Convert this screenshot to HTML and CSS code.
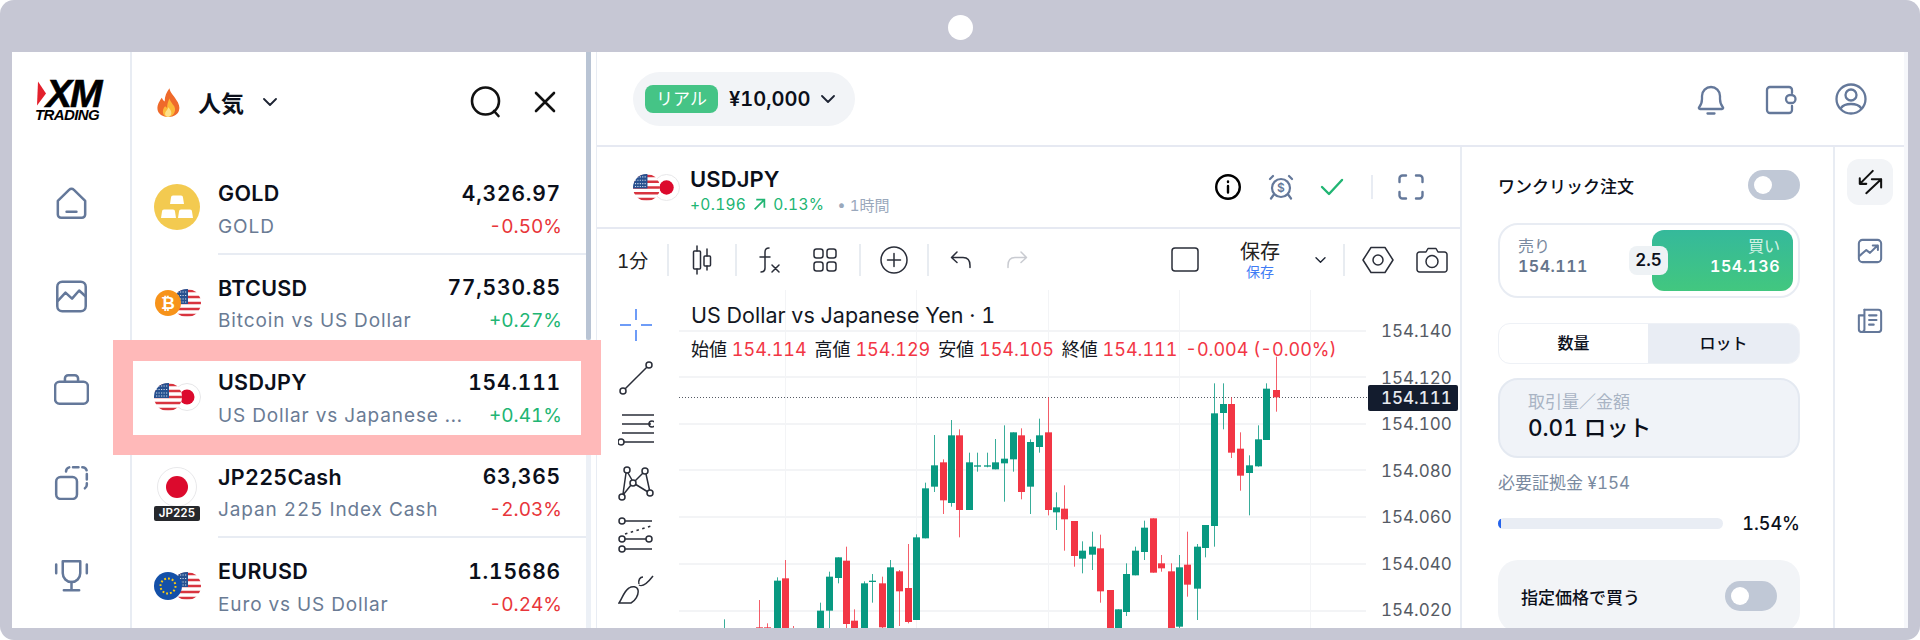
FILE: index.html
```html
<!DOCTYPE html>
<html lang="ja">
<head>
    <meta charset="UTF-8">
    <meta name="viewport" content="width=device-width, initial-scale=1.0">
    <title>XM Trading</title>
    <link rel="stylesheet" href="styles.css">
</head>
<body>
    <svg class="defs" width="0" height="0">
        <defs>
            <clipPath id="clipDisc"><circle cx="14" cy="14" r="14"/></clipPath>
            <symbol id="flagUs" viewBox="0 0 28 28">
                <g clip-path="url(#clipDisc)">
                    <rect width="28" height="28" fill="#fff"/>
                    <path d="M0 2h28M0 8h28M0 14h28M0 20h28M0 26h28" stroke="#d8343f" stroke-width="2.6"/>
                    <rect width="15" height="15" fill="#27508f"/>
                    <path d="M2 3h12M2 6.5h12M2 10h12M2 13h12" stroke="#cfd9ea" stroke-width="1.2" stroke-dasharray="1.2 1.3"/>
                </g>
            </symbol>
            <symbol id="flagJp" viewBox="0 0 28 28">
                <circle cx="14" cy="14" r="13.5" fill="#fff" stroke="#e6e6e8" stroke-width="1"/>
                <circle cx="14" cy="14" r="7.5" fill="#dc0a2d"/>
            </symbol>
        </defs>
    </svg>

    <div class="frame">
        <div class="frame-top"><span class="notch"></span></div>

        <div class="panel">
            <nav class="rail">
                <div class="logo">
                    <svg class="logo-mark" viewBox="0 0 9 24"><polygon points="1,0 9,12 0,24" fill="#e3202c"/></svg>
                    <span class="logo-xm">XM</span>
                    <span class="logo-sub">TRADING</span>
                </div>
                <svg class="rail-icon" viewBox="0 0 32 32"><path d="M3.5 13.6 14 3.4a2.8 2.8 0 0 1 4 0l10.500 10.200V26a3 3 0 0 1-3 3h-19a3 3 0 0 1-3-3z"/><path d="M11.500 23.500h9"/></svg>
                <svg class="rail-icon" viewBox="0 0 32 32"><rect x="3" y="2.500" width="26" height="27" rx="4.500"/><path d="m3.500 20 7-7.500 6 5.500 6.500-7.500 5.500 5"/></svg>
                <svg class="rail-icon" viewBox="0 0 32 32"><rect x="1" y="9" width="30" height="20" rx="4"/><path d="M10 9V6a3 3 0 0 1 3-3h6a3 3 0 0 1 3 3v3"/></svg>
                <svg class="rail-icon" viewBox="0 0 32 32"><rect x="2" y="11" width="19" height="20" rx="4"/><path d="M11 6a4 4 0 0 1 4-4h11a4 4 0 0 1 4 4v12a4 4 0 0 1-4 4" stroke-dasharray="5 3.500"/></svg>
                <svg class="rail-icon" viewBox="0 0 32 32"><path d="M8 3h16v11a8 8 0 0 1-16 0z"/><path d="M2 6v8M30 6v8M16 22v7M9 29.500h14"/></svg>
            </nav>

            <section class="watchlist">
                <header class="list-head">
                    <svg class="fire" viewBox="0 0 24 30">
                        <path d="M13 0c1 5 4 7 7 12 3 4 4 8 3 11-1 4-5 7-11 7S1 27 .5 22C0 17 3 13 5 10c1 2 1.500 3 3 4C8 8 10 4 13 0z" fill="#ef6a2b"/>
                        <path d="M13 11c1 3 3 5 5 8 1.500 3 1 6-1 8.500-1.500 1.800-3.500 2.500-5.500 2.500s-4-1-5-3c-1-3 0-6 2-8 1 1 1.500 1 2 2 0-4 1-7 2.500-10.500z" fill="#fcb737"/>
                        <path d="M12 20c1 2 3 3 3 6 0 2-1.500 4-3.500 4S8 28 8.500 26c.3-2 2.500-3 3.500-6z" fill="#fde08a"/>
                    </svg>
                    <span class="list-title">人気</span>
                    <svg class="chev list-chev" viewBox="0 0 14 8"><path d="m1 1 6 6 6-6"/></svg>
                    <svg class="search" viewBox="0 0 32 32"><circle cx="15.500" cy="15" r="13.500"/><path d="m24 25 4.500 5"/></svg>
                    <svg class="close" viewBox="0 0 22 22"><path d="m2 2 18 18M20 2 2 20"/></svg>
                </header>

                <div class="row">
                    <div class="row-icon">
                        <svg viewBox="0 0 46 46" width="46" height="46">
                            <circle cx="23" cy="23" r="23" fill="#f3ca50"/>
                            <path d="M17 13.500a2 2 0 0 1 2-2h8a2 2 0 0 1 2 2l1 6.500H16zM8 27.500a2 2 0 0 1 2-2h9a2 2 0 0 1 2 2l1 6.500H7zM25 27.500a2 2 0 0 1 2-2h9a2 2 0 0 1 2 2l1 6.500H24z" fill="#fff"/>
                        </svg>
                    </div>
                    <div class="row-body">
                        <div class="row-line"><span class="sym">GOLD</span><span class="price">4,326.97</span></div>
                        <div class="row-line row-sub"><span class="desc">GOLD</span><span class="down">-0.50%</span></div>
                    </div>
                </div>
                <div class="row">
                    <div class="row-icon">
                        <svg class="flag flag-back" viewBox="0 0 28 28"><use href="#flagUs"/></svg>
                        <svg class="flag flag-front" viewBox="0 0 28 28">
                            <circle cx="14" cy="14" r="13" fill="#f7931a"/>
                            <text x="14" y="20" class="btc-text">₿</text>
                        </svg>
                    </div>
                    <div class="row-body">
                        <div class="row-line"><span class="sym">BTCUSD</span><span class="price">77,530.85</span></div>
                        <div class="row-line row-sub"><span class="desc">Bitcoin vs US Dollar</span><span class="up">+0.27%</span></div>
                    </div>
                </div>
                <div class="row">
                    <div class="row-icon">
                        <svg class="flag flag-back" viewBox="0 0 28 28"><use href="#flagJp"/></svg>
                        <svg class="flag flag-front" viewBox="0 0 28 28"><use href="#flagUs"/></svg>
                    </div>
                    <div class="row-body">
                        <div class="row-line"><span class="sym">USDJPY</span><span class="price">154.111</span></div>
                        <div class="row-line row-sub"><span class="desc">US Dollar vs Japanese ...</span><span class="up">+0.41%</span></div>
                    </div>
                </div>
                <div class="row">
                    <div class="row-icon">
                        <svg class="jp-disc" viewBox="0 0 40 40"><circle cx="20" cy="20" r="19.500" fill="#fff" stroke="#e8e8ea"/><circle cx="20" cy="20" r="11" fill="#dc0a2d"/></svg>
                        <span class="jp-tag">JP225</span>
                    </div>
                    <div class="row-body">
                        <div class="row-line"><span class="sym">JP225Cash</span><span class="price">63,365</span></div>
                        <div class="row-line row-sub"><span class="desc">Japan 225 Index Cash</span><span class="down">-2.03%</span></div>
                    </div>
                </div>
                <div class="row">
                    <div class="row-icon">
                        <svg class="flag flag-back" viewBox="0 0 28 28"><use href="#flagUs"/></svg>
                        <svg class="flag flag-front" viewBox="0 0 28 28">
                            <circle cx="14" cy="14" r="14" fill="#1450a8"/>
                            <circle cx="14" cy="14" r="7.500" fill="none" stroke="#f6c913" stroke-width="2" stroke-dasharray="1.900 2"/>
                        </svg>
                    </div>
                    <div class="row-body">
                        <div class="row-line"><span class="sym">EURUSD</span><span class="price">1.15686</span></div>
                        <div class="row-line row-sub"><span class="desc">Euro vs US Dollar</span><span class="down">-0.24%</span></div>
                    </div>
                </div>
            </section>
            <div class="list-scroll"><span class="list-thumb"></span></div>

            <main class="main">
                <header class="topbar">
                    <div class="account">
                        <span class="badge">リアル</span>
                        <span class="balance">¥10,000</span>
                        <svg class="chev" viewBox="0 0 14 8"><path d="m1 1 6 6 6-6"/></svg>
                    </div>
                    <div class="top-icons">
                        <svg class="top-icon" viewBox="0 0 32 32"><path d="M4 24.500c2-2.500 3-4 3-8.500v-3a9 9 0 0 1 18 0v3c0 4.500 1 6 3 8.500.4.600 0 1.500-1 1.500H5c-1 0-1.400-.9-1-1.500zM12.500 30.500h7"/></svg>
                        <svg class="top-icon" viewBox="0 0 32 32"><path d="M27 10V7a3 3 0 0 0-3-3H5a3 3 0 0 0-3 3v20a3 3 0 0 0 3 3h19a3 3 0 0 0 3-3v-4"/><rect x="21" y="12" width="9.500" height="8" rx="4"/></svg>
                        <svg class="top-icon" viewBox="0 0 32 32"><circle cx="16" cy="16" r="14.500"/><circle cx="16" cy="12" r="5.500"/><path d="M6 25c2-3 6-4 10-4s8 1 10 4"/></svg>
                    </div>
                </header>

                <div class="workspace">
                    <div class="chart-col">
                        <div class="chart-head">
                            <div class="pair-icon">
                                <svg class="pair-flag pair-jp" viewBox="0 0 28 28"><use href="#flagJp"/></svg>
                                <svg class="pair-flag pair-us" viewBox="0 0 28 28"><use href="#flagUs"/></svg>
                            </div>
                            <div class="pair-text">
                                <div class="pair-name">USDJPY</div>
                                <div class="pair-sub">
                                    <span>+0.196</span>
                                    <svg class="trend" viewBox="0 0 12 12"><path d="M1.500 10.500 10.500 1.500M3 1.500h7.500V9"/></svg>
                                    <span>0.13%</span>
                                    <span class="pair-time">• 1時間</span>
                                </div>
                            </div>
                            <div class="head-icons">
                                <svg class="head-icon info" viewBox="0 0 26 26"><circle cx="13" cy="13" r="11.800"/><path d="M13 12v6.500M13 7.500v.6"/></svg>
                                <svg class="head-icon alarm" viewBox="0 0 26 26"><circle cx="13" cy="14" r="9"/><path d="m2 5 3-3M24 5l-3-3M5.500 21 3 24.500M20.500 21l2.500 3.500"/><text x="13" y="18" class="alarm-text">$</text></svg>
                                <svg class="head-icon check" viewBox="0 0 24 18"><path d="m2 9 7 7L22 2"/></svg>
                                <span class="head-sep"></span>
                                <svg class="head-icon full" viewBox="0 0 26 26"><path d="M1.500 8V4.500a3 3 0 0 1 3-3H8M18 1.500h3.500a3 3 0 0 1 3 3V8M24.500 18v3.500a3 3 0 0 1-3 3H18M8 24.500H4.500a3 3 0 0 1-3-3V18"/></svg>
                            </div>
                        </div>

                        <div class="toolbar">
                            <span class="interval">1分</span>
                            <span class="sep"></span>
                            <button class="tool w66"><svg viewBox="0 0 24 30" width="24" height="30"><path d="M7 1v5M7 24v5M17 4v7M17 21v4"/><rect x="3.500" y="6" width="7" height="18" rx="1"/><rect x="14" y="11" width="6.500" height="10" rx="1"/></svg></button>
                            <span class="sep"></span>
                            <button class="tool w64"><svg viewBox="0 0 26 28" width="26" height="28"><path d="M13 2c-3 0-4 1.500-4 4v16c0 3-1.500 4-4 4M4 11h10M16 19l7 7M23 19l-7 7"/></svg></button>
                            <button class="tool w48"><svg viewBox="0 0 24 24" width="24" height="24"><rect x="1" y="1" width="9" height="9" rx="2.500"/><rect x="14" y="1" width="9" height="9" rx="2.500"/><rect x="1" y="14" width="9" height="9" rx="2.500"/><rect x="14" y="14" width="9" height="9" rx="2.500"/></svg></button>
                            <span class="sep sep-gap"></span>
                            <button class="tool w66"><svg viewBox="0 0 28 28" width="28" height="28"><circle cx="14" cy="14" r="13"/><path d="M14 7.500v13M7.500 14h13"/></svg></button>
                            <span class="sep"></span>
                            <button class="tool w64"><svg viewBox="0 0 22 18" width="22" height="18"><path d="M7 1 1.500 6.500 7 11.500M2 6.500h11c4.500 0 7 3 7 8v2"/></svg></button>
                            <button class="tool w48 muted"><svg viewBox="0 0 22 18" width="22" height="18"><path d="m15 1 5.500 5.500-5.500 5M20 6.500H9c-4.500 0-7 3-7 8v2"/></svg></button>

                            <div class="tool-right">
                                <button class="tool w40"><svg viewBox="0 0 28 25" width="28" height="25"><rect x="1" y="1" width="26" height="23" rx="3"/></svg></button>
                                <div class="save">
                                    <span class="save-main">保存</span>
                                    <span class="save-sub">保存</span>
                                </div>
                                <svg class="chev save-chev" viewBox="0 0 14 8"><path d="m1 1 6 6 6-6"/></svg>
                                <span class="sep sep-right"></span>
                                <button class="tool w52"><svg viewBox="0 0 32 28" width="32" height="28"><path d="M9 1.500h14l8 12.500-8 12.500H9L1 14z"/><circle cx="16" cy="14" r="5"/></svg></button>
                                <button class="tool w56"><svg viewBox="0 0 32 26" width="32" height="26"><path d="M3.500 5H10l2-3.500h8L22 5h6.500a2.500 2.500 0 0 1 2.500 2.500v15a2.500 2.500 0 0 1-2.500 2.500h-25A2.500 2.500 0 0 1 1 22.500v-15A2.500 2.500 0 0 1 3.500 5z"/><circle cx="16" cy="14.500" r="6"/></svg></button>
                            </div>
                        </div>

                        <div class="chart-body">
                            <div class="draw-tools">
                                <svg class="draw crosshair" viewBox="0 0 36 36"><path d="M18 2v11M18 23v11M2 18h11M23 18h11"/></svg>
                                <svg class="draw" viewBox="0 0 36 36"><circle cx="5" cy="31" r="3"/><circle cx="31" cy="5" r="3"/><path d="M7.200 28.800 28.800 7.200"/></svg>
                                <svg class="draw" viewBox="0 0 36 36"><path d="M4 3h32M4 12h29M4 21h32M6 30h30"/><circle cx="34" cy="12" r="3"/><circle cx="3" cy="30" r="3"/></svg>
                                <svg class="draw" viewBox="0 0 36 36"><circle cx="9" cy="5" r="3"/><circle cx="27" cy="6" r="3"/><circle cx="15" cy="18" r="3"/><circle cx="4" cy="32" r="3"/><circle cx="32" cy="28" r="3"/><path d="M10 8l4 7M25 8l-8 8M17 19l13 8M13 20l-8 10M5 29 8 8M28 9l3.500 16"/></svg>
                                <svg class="draw" viewBox="0 0 36 36"><circle cx="4" cy="4" r="3"/><circle cx="4" cy="22" r="3"/><circle cx="31" cy="22" r="3"/><circle cx="4" cy="32" r="3"/><path d="M7 4h27M7 22h21M7 32h27"/><path d="M7 17 33 9" stroke-dasharray="2.500 3.500"/></svg>
                                <svg class="draw" viewBox="0 0 36 36"><path d="M1 33c3-4 5-12 10-15 3-2 8-2 9 2 1 5-3 11-7 13z"/><path d="M21 14c-1-4 1-7 4-7M21 15c3 2 7 0 14-9"/></svg>
                            </div>

                            <div class="stage">
                                <svg id="candles" class="candles" viewBox="672 290 789 338"></svg>
                                <div class="legend">
                                    <div class="legend-title">US Dollar vs Japanese Yen · 1</div>
                                    <div class="legend-ohlc">
                                        <span class="ohlc-key">始値</span> <span class="ohlc-val">154.114</span>
                                        <span class="ohlc-key">高値</span> <span class="ohlc-val">154.129</span>
                                        <span class="ohlc-key">安値</span> <span class="ohlc-val">154.105</span>
                                        <span class="ohlc-key">終値</span> <span class="ohlc-val">154.111</span>
                                        <span class="ohlc-val">-0.004 (-0.00%)</span>
                                    </div>
                                </div>
                                <div class="axis">
                                    <span>154.140</span>
                                    <span>154.120</span>
                                    <span>154.100</span>
                                    <span>154.080</span>
                                    <span>154.060</span>
                                    <span>154.040</span>
                                    <span>154.020</span>
                                </div>
                                <span class="last-price">154.111</span>
                            </div>
                        </div>
                    </div>

                    <aside class="order">
                        <div class="order-line">
                            <span class="order-label">ワンクリック注文</span>
                            <span class="toggle"><span class="knob"></span></span>
                        </div>
                        <div class="quote">
                            <div class="sell">
                                <span class="sell-label">売り</span>
                                <span class="sell-price">154.111</span>
                            </div>
                            <div class="buy">
                                <span class="buy-label">買い</span>
                                <span class="buy-price">154.136</span>
                            </div>
                            <span class="spread">2.5</span>
                        </div>
                        <div class="segment">
                            <span class="seg">数量</span>
                            <span class="seg seg-on">ロット</span>
                        </div>
                        <div class="volume">
                            <span class="volume-label">取引量／金額</span>
                            <span class="volume-value">0.01 ロット</span>
                        </div>
                        <div class="margin-label">必要証拠金 ¥154</div>
                        <div class="margin-line">
                            <div class="bar"><span class="bar-fill"></span></div>
                            <span class="margin-pct">1.54%</span>
                        </div>
                        <div class="limit">
                            <span class="order-label">指定価格で買う</span>
                            <span class="toggle"><span class="knob"></span></span>
                        </div>
                    </aside>

                    <div class="side">
                        <div class="side-btn side-on"><svg class="side-icon dark" viewBox="0 0 28 28"><path d="M17 2 3 16M3 10v6h7M10 26l16-15M16 11h10v9"/></svg></div>
                        <div class="side-btn"><svg class="side-icon" viewBox="0 0 28 28"><rect x="2" y="2" width="24" height="24" rx="4"/><path d="m3 19 7-6 4 3 8-8M17 8h5.500v5"/></svg></div>
                        <div class="side-btn"><svg class="side-icon" viewBox="0 0 28 28"><path d="M8 3h15a3 3 0 0 1 3 3v18a3 3 0 0 1-3 3H5"/><path d="M8 3v21a3 3 0 0 1-3 3 3 3 0 0 1-3-3V9h6M13 9h8M13 14h8M13 19h5"/></svg></div>
                    </div>
                </div>
            </main>
        </div>

        <div class="highlight"></div>
    </div>

    <script src="chart.js"></script>
</body>
</html>
```

FILE: styles.css
```css
* {
    box-sizing: border-box;
}
body {
    margin: 0;
    background: #ffffff;
    font-family: Inter, "Noto Sans CJK JP", sans-serif;
    font-variant-numeric: tabular-nums;
    color: #0b0f1a;
}
svg {
    display: block;
    fill: none;
}
button {
    padding: 0;
    border: none;
    background: none;
}
.defs {
    position: absolute;
}

/* frame */
.frame {
    position: relative;
    width: 1920px;
    height: 640px;
    padding: 0 12px 12px;
    background: #c6c7d4;
    border-radius: 14px;
    overflow: hidden;
}
.frame-top {
    height: 52px;
    display: flex;
    align-items: center;
    justify-content: center;
}
.notch {
    width: 25px;
    height: 25px;
    margin-top: 2px;
    border-radius: 50%;
    background: #ffffff;
}
.panel {
    display: flex;
    height: 576px;
    background: #ffffff;
    overflow: hidden;
}
.highlight {
    position: absolute;
    left: 113px;
    top: 340px;
    width: 488px;
    height: 115px;
    border: solid #ffb9b9;
    border-width: 21px 20px 20px 20px;
}

/* left rail */
.rail {
    width: 120px;
    flex: none;
    display: flex;
    flex-direction: column;
    align-items: center;
    border-right: 2px solid #e8ecf3;
}
.rail-icon {
    width: 35px;
    height: 35px;
    flex: none;
    margin-bottom: 58px;
    stroke: #64789a;
    stroke-width: 2.300;
    stroke-linecap: round;
    stroke-linejoin: round;
}
.logo {
    position: relative;
    width: 72px;
    height: 42px;
    flex: none;
    margin: 28px 0 64px;
}
.logo-mark {
    position: absolute;
    left: 2px;
    top: 1px;
    width: 9px;
    height: 25px;
}
.logo-xm {
    position: absolute;
    left: 11px;
    top: 0;
    font-family: "Liberation Sans", sans-serif;
    font-size: 39px;
    line-height: 27px;
    font-weight: 700;
    font-style: italic;
    letter-spacing: -2px;
    -webkit-text-stroke: .6px #000000;
    color: #000000;
}
.logo-sub {
    position: absolute;
    left: 0;
    top: 29px;
    font-family: "Liberation Sans", sans-serif;
    font-size: 15px;
    line-height: 12px;
    font-weight: 700;
    font-style: italic;
    letter-spacing: -.6px;
    color: #000000;
}

/* watch list */
.watchlist {
    width: 454px;
    flex: none;
}
.list-head {
    height: 108px;
    display: flex;
    align-items: center;
    padding: 0 0 8px 25px;
}
.fire {
    width: 23px;
    height: 29px;
}
.list-title {
    margin-left: 18px;
    font-size: 23px;
    font-weight: 700;
}
.chev {
    width: 14px;
    height: 8px;
    stroke: #1d2433;
    stroke-width: 1.800;
    stroke-linecap: round;
    stroke-linejoin: round;
}
.list-chev {
    margin-left: 19px;
}
.search {
    width: 32px;
    height: 32px;
    margin-left: 193px;
    stroke: #111111;
    stroke-width: 2.600;
    stroke-linecap: round;
}
.close {
    width: 22px;
    height: 22px;
    margin-left: 32px;
    stroke: #111111;
    stroke-width: 2.600;
    stroke-linecap: round;
}
.row {
    height: 94.500px;
    display: flex;
    align-items: stretch;
    padding-left: 22px;
}
.row-icon {
    position: relative;
    width: 46px;
    flex: none;
    margin-right: 18px;
    display: flex;
    align-items: center;
    justify-content: center;
}
.flag {
    position: absolute;
    top: 50%;
    width: 28px;
    height: 28px;
    margin-top: -13px;
}
.flag-back {
    left: 19px;
}
.flag-front {
    left: 0;
}
.btc-text {
    font-family: "DejaVu Sans", sans-serif;
    font-size: 17px;
    font-weight: 700;
    fill: #ffffff;
    text-anchor: middle;
}
.jp-disc {
    width: 40px;
    height: 40px;
    margin-top: -7px;
}
.jp-tag {
    position: absolute;
    left: 0;
    bottom: 17px;
    width: 46px;
    height: 15px;
    background: #26282c;
    border-radius: 2px;
    color: #ffffff;
    font-size: 11.500px;
    line-height: 15px;
    font-weight: 600;
    text-align: center;
}
.row-body {
    flex: 1;
    padding: 19px 25px 0 0;
    border-bottom: 2px solid #e8ecf3;
}
.row:last-child .row-body {
    border-bottom: none;
}
.row-line {
    display: flex;
    justify-content: space-between;
    align-items: center;
    height: 28px;
}
.row-sub {
    height: 24px;
    margin-top: 7px;
    font-size: 19px;
}
.sym {
    font-size: 21.500px;
    font-weight: 600;
    letter-spacing: .3px;
}
.price {
    font-size: 21px;
    font-weight: 600;
    letter-spacing: .8px;
}
.desc {
    color: #6a7b94;
    letter-spacing: .9px;
}
.up {
    margin-right: -1px;
    color: #21b573;
}
.down {
    margin-right: -1px;
    color: #e8353a;
}
.list-scroll {
    width: 5px;
    flex: none;
    margin-right: 5px;
    background: #ecf0f6;
}
.list-thumb {
    display: block;
    width: 5px;
    height: 288px;
    background: #b9c4d4;
    border-radius: 0 0 3px 3px;
}

/* main column */
.main {
    flex: 1;
    min-width: 0;
    display: flex;
    flex-direction: column;
    border-left: 1px solid #e8ecf3;
    border-right: 4px solid #f6f7fb;
}
.topbar {
    height: 95px;
    flex: none;
    display: flex;
    align-items: center;
    justify-content: space-between;
    padding: 0 37px 0 36px;
    border-bottom: 2px solid #e6e9f2;
}
.account {
    width: 222px;
    height: 54px;
    display: flex;
    align-items: center;
    padding-left: 12px;
    background: #f2f4f7;
    border-radius: 27px;
}
.badge {
    width: 73px;
    height: 28px;
    background: #45c486;
    border-radius: 8px;
    color: #ffffff;
    font-size: 17px;
    line-height: 28px;
    text-align: center;
}
.balance {
    margin: 0 11px;
    font-size: 20px;
    font-weight: 600;
}
.top-icons {
    display: flex;
    gap: 38px;
}
.top-icon {
    width: 32px;
    height: 32px;
    stroke: #64789a;
    stroke-width: 2.300;
    stroke-linecap: round;
    stroke-linejoin: round;
}
.workspace {
    flex: 1;
    display: flex;
    min-height: 0;
}
.chart-col {
    width: 865px;
    flex: none;
    display: flex;
    flex-direction: column;
    border-right: 2px solid #e8ecf3;
}

/* chart header */
.chart-head {
    height: 82px;
    flex: none;
    display: flex;
    align-items: center;
    padding: 0 36px 0 36px;
    border-bottom: 2px solid #e6e9f2;
}
.pair-icon {
    position: relative;
    width: 46px;
    height: 28px;
    margin-top: 2px;
}
.pair-flag {
    position: absolute;
    top: 0;
    width: 27px;
    height: 27px;
}
.pair-jp {
    left: 20px;
}
.pair-us {
    left: 0;
}
.pair-text {
    margin-left: 11px;
    padding-top: 5px;
}
.pair-name {
    font-size: 22px;
    line-height: 28px;
    font-weight: 600;
    letter-spacing: .1px;
}
.pair-sub {
    display: flex;
    align-items: center;
    gap: 7px;
    height: 20px;
    margin-top: 2px;
    color: #21b573;
    font-size: 15.500px;
    letter-spacing: .3px;
}
.trend {
    width: 13px;
    height: 13px;
    stroke: #21b573;
    stroke-width: 1.600;
}
.pair-time {
    margin-left: 6px;
    color: #9aa8bc;
    font-size: 15px;
    letter-spacing: 0;
}
.head-icons {
    margin-left: auto;
    display: flex;
    align-items: center;
}
.head-icon {
    width: 26px;
    height: 26px;
    stroke-linecap: round;
    stroke-linejoin: round;
}
.info {
    stroke: #000000;
    stroke-width: 2.400;
}
.alarm {
    margin-left: 27px;
    stroke: #64789a;
    stroke-width: 2.200;
}
.alarm-text {
    fill: #64789a;
    stroke: none;
    font-size: 12px;
    font-weight: 600;
    text-anchor: middle;
}
.check {
    width: 24px;
    height: 18px;
    margin-left: 26px;
    stroke: #21b573;
    stroke-width: 2.400;
}
.head-sep {
    width: 2px;
    height: 24px;
    margin-left: 27px;
    background: #e8ecf3;
}
.full {
    margin-left: 25px;
    stroke: #64789a;
    stroke-width: 2.400;
}

/* chart toolbar */
.toolbar {
    height: 61px;
    flex: none;
    display: flex;
    align-items: center;
    padding-left: 20px;
}
.interval {
    width: 28px;
    margin-right: 22px;
    font-size: 19px;
    color: #222222;
    white-space: nowrap;
}
.sep {
    width: 2px;
    height: 32px;
    flex: none;
    background: #e8ecf1;
}
.sep-gap {
    margin-left: 10px;
}
.sep-right {
    margin-right: 7px;
}
.tool {
    display: flex;
    align-items: center;
    justify-content: center;
    flex: none;
}
.tool svg {
    stroke: #2a2e39;
    stroke-width: 1.500;
    stroke-linecap: round;
    stroke-linejoin: round;
}
.tool.muted svg {
    stroke: #c9cbd1;
}
.w40 {
    width: 40px;
}
.w48 {
    width: 48px;
}
.w52 {
    width: 52px;
}
.w56 {
    width: 56px;
}
.w64 {
    width: 64px;
}
.w66 {
    width: 66px;
}
.tool-right {
    margin-left: auto;
    display: flex;
    align-items: center;
}
.save {
    width: 70px;
    margin: 0 15px 0 20px;
    display: flex;
    flex-direction: column;
    align-items: center;
}
.save-main {
    font-size: 20px;
    line-height: 24px;
    color: #222222;
}
.save-sub {
    font-size: 14px;
    line-height: 16px;
    color: #3f7cf5;
}
.save-chev {
    width: 11px;
    height: 6px;
    margin: 0 17px 0 5px;
}

/* chart */
.chart-body {
    flex: 1;
    min-height: 0;
    display: flex;
}
.draw-tools {
    width: 76px;
    flex: none;
    display: flex;
    flex-direction: column;
    align-items: center;
    gap: 16.500px;
    padding: 17px 0 0 2px;
    overflow: hidden;
}
.draw {
    width: 36px;
    height: 36px;
    flex: none;
    stroke: #2a2e39;
    stroke-width: 1.500;
}
.crosshair {
    stroke: #3f7cf5;
}
.stage {
    position: relative;
    flex: 1;
    overflow: hidden;
}
.candles {
    position: absolute;
    left: 0;
    top: 0;
    width: 789px;
    height: 338px;
}
.legend {
    position: absolute;
    left: 18px;
    top: 10px;
    color: #131722;
}
.legend-title {
    font-size: 21.500px;
    line-height: 30px;
    letter-spacing: 0;
}
.legend-ohlc {
    margin-top: 8px;
    font-size: 18px;
    line-height: 24px;
    white-space: nowrap;
}
.ohlc-val {
    margin-right: 3px;
    color: #f23645;
}
.axis {
    position: absolute;
    left: 708px;
    top: 18px;
    display: flex;
    flex-direction: column;
    color: #555a64;
    font-size: 17px;
    line-height: 46.500px;
}
.last-price {
    position: absolute;
    left: 695px;
    top: 95px;
    width: 90px;
    height: 26px;
    padding-left: 13px;
    background: #131c2e;
    border-radius: 2px;
    color: #e6e9ee;
    font-size: 17px;
    font-weight: 500;
    line-height: 26px;
}

/* order panel */
.order {
    width: 373px;
    flex: none;
    padding: 0 33px 0 36px;
    border-right: 2px solid #e8ecf3;
}
.order-line {
    height: 76px;
    display: flex;
    align-items: center;
    justify-content: space-between;
}
.order-label {
    font-size: 17px;
    font-weight: 500;
}
.toggle {
    width: 52px;
    height: 30px;
    display: flex;
    align-items: center;
    padding-left: 6px;
    background: #c0c8d6;
    border-radius: 15px;
}
.knob {
    width: 18px;
    height: 18px;
    background: #ffffff;
    border-radius: 50%;
}
.quote {
    position: relative;
    height: 75px;
    display: flex;
    justify-content: space-between;
    padding: 5px;
    border: 2px solid #e8ecf3;
    border-radius: 20px;
}
.sell {
    padding: 6px 0 0 13px;
    display: flex;
    flex-direction: column;
}
.sell-label {
    font-size: 16px;
    line-height: 20px;
    color: #7a8aa0;
}
.sell-price {
    font-size: 16px;
    line-height: 21px;
    font-weight: 600;
    letter-spacing: .5px;
    color: #64748b;
}
.buy {
    width: 141px;
    padding: 6px 13px 0 0;
    display: flex;
    flex-direction: column;
    align-items: flex-end;
    background: linear-gradient(#35b99b, #42c77f);
    border-radius: 12px;
    color: #ffffff;
}
.buy-label {
    font-size: 16px;
    line-height: 20px;
    color: #d6f3e6;
}
.buy-price {
    font-size: 16px;
    line-height: 21px;
    font-weight: 600;
    letter-spacing: .5px;
}
.spread {
    position: absolute;
    left: 129px;
    top: 21px;
    width: 39px;
    height: 29px;
    background: #eef2f5;
    border-radius: 8px;
    font-size: 17px;
    line-height: 29px;
    font-weight: 600;
    text-align: center;
}
.segment {
    height: 41px;
    margin-top: 25px;
    display: flex;
    border: 1px solid #eef1f6;
    border-radius: 12px;
    overflow: hidden;
}
.seg {
    flex: 1;
    font-size: 16px;
    line-height: 39px;
    font-weight: 500;
    text-align: center;
}
.seg-on {
    flex: none;
    width: 151px;
    background: #e9edf4;
}
.volume {
    height: 80px;
    margin-top: 14px;
    padding: 10px 0 0 28px;
    display: flex;
    flex-direction: column;
    background: #f0f3f8;
    border: 2px solid #e4e9f1;
    border-radius: 20px;
}
.volume-label {
    font-size: 17px;
    line-height: 24px;
    color: #a9b4c4;
}
.volume-value {
    font-size: 22.500px;
    line-height: 28px;
    font-weight: 500;
}
.margin-label {
    margin-top: 13px;
    font-size: 17px;
    line-height: 24px;
    color: #7a8aa0;
}
.margin-line {
    height: 26px;
    margin-top: 15px;
    display: flex;
    align-items: center;
    justify-content: space-between;
}
.bar {
    width: 225px;
    height: 11px;
    background: #e9edf4;
    border-radius: 6px;
    overflow: hidden;
}
.bar-fill {
    display: block;
    width: 3px;
    height: 11px;
    background: #2563eb;
    border-radius: 2px;
}
.margin-pct {
    font-size: 18px;
    font-weight: 500;
}
.limit {
    height: 72px;
    margin-top: 24px;
    padding: 0 23px;
    display: flex;
    align-items: center;
    justify-content: space-between;
    background: #f2f4f7;
    border-radius: 20px;
}

/* right side buttons */
.side {
    flex: 1;
    display: flex;
    flex-direction: column;
    align-items: center;
    gap: 23px;
    padding-top: 12px;
}
.side-btn {
    width: 46px;
    height: 46px;
    display: flex;
    align-items: center;
    justify-content: center;
    border-radius: 12px;
}
.side-on {
    background: #f2f4f7;
}
.side-icon {
    width: 26px;
    height: 26px;
    stroke: #64789a;
    stroke-width: 2.200;
    stroke-linecap: round;
    stroke-linejoin: round;
}
.side-icon.dark {
    stroke: #111111;
}
```

FILE: chart.js
```js
// x, wick top, wick bottom, body top, body bottom, colour (g/r)
// measured in thirds of a pixel from (600, 340)
const candles = [
    [368, 838, 900, 900, 900, 'g'], [474, 780, 900, 862, 900, 'r'], [499, 850, 900, 862, 900, 'r'],
    [527, 712, 900, 722, 900, 'g'], [552, 660, 900, 715, 900, 'r'], [577, 858, 900, 880, 900, 'r'],
    [658, 788, 900, 812, 900, 'g'], [683, 695, 900, 710, 812, 'g'], [711, 652, 730, 652, 714, 'g'],
    [736, 620, 900, 662, 852, 'r'], [760, 808, 900, 842, 900, 'r'], [789, 724, 900, 730, 900, 'g'],
    [814, 702, 788, 722, 726, 'g'], [842, 710, 900, 730, 862, 'r'], [867, 660, 900, 682, 900, 'g'],
    [895, 690, 858, 694, 754, 'r'], [920, 612, 850, 744, 846, 'r'], [945, 583, 840, 592, 840, 'g'],
    [973, 428, 595, 445, 595, 'g'], [998, 285, 456, 376, 440, 'g'], [1026, 358, 522, 367, 481, 'r'],
    [1051, 240, 500, 286, 489, 'g'], [1075, 268, 592, 286, 510, 'r'], [1104, 338, 510, 367, 510, 'g'],
    [1129, 338, 395, 376, 380, 'g'], [1158, 338, 382, 376, 380, 'g'], [1182, 297, 388, 367, 388, 'g'],
    [1210, 256, 485, 356, 370, 'g'], [1235, 277, 395, 277, 358, 'g'], [1260, 265, 478, 286, 456, 'r'],
    [1288, 298, 522, 306, 440, 'g'], [1313, 236, 338, 286, 321, 'g'], [1341, 172, 526, 277, 510, 'r'],
    [1366, 457, 570, 502, 517, 'g'], [1390, 436, 632, 506, 538, 'r'], [1419, 543, 680, 543, 648, 'r'],
    [1444, 604, 700, 632, 656, 'g'], [1472, 575, 690, 620, 644, 'g'], [1497, 584, 788, 625, 754, 'r'],
    [1526, 750, 900, 750, 900, 'r'], [1551, 808, 900, 808, 900, 'g'], [1575, 670, 828, 702, 816, 'g'],
    [1603, 620, 706, 632, 706, 'g'], [1628, 542, 660, 563, 636, 'g'], [1657, 535, 698, 535, 698, 'r'],
    [1681, 645, 695, 670, 685, 'r'], [1709, 670, 900, 694, 900, 'r'], [1734, 645, 900, 682, 860, 'g'],
    [1758, 575, 770, 674, 734, 'r'], [1787, 612, 840, 620, 746, 'g'], [1812, 555, 652, 555, 624, 'g'],
    [1840, 130, 620, 220, 558, 'g'], [1865, 130, 268, 192, 219, 'g'], [1890, 172, 354, 192, 338, 'r'],
    [1918, 277, 452, 326, 407, 'r'], [1943, 346, 526, 376, 399, 'g'], [1971, 256, 380, 298, 379, 'g'],
    [1996, 130, 300, 146, 300, 'g'], [2025, 50, 215, 150, 172, 'r']
];

const svg = document.getElementById('candles');
const colors = { g: '#089981', r: '#f23645' };

function add(tag, attrs) {
    const el = document.createElementNS('http://www.w3.org/2000/svg', tag);
    Object.keys(attrs).forEach(function (key) {
        el.setAttribute(key, attrs[key]);
    });
    svg.appendChild(el);
}

// grid
[784, 915, 1047, 1178, 1309].forEach(function (x) {
    add('rect', { x: x, y: 290, width: 1, height: 338, fill: '#f3f4f6' });
});
[330, 376, 423, 469, 516, 563, 610].forEach(function (y) {
    add('rect', { x: 678, y: y, width: 687, height: 2, fill: '#f3f4f6' });
});

// last price line
add('line', {
    x1: 678, y1: 397.5, x2: 1367, y2: 397.5,
    stroke: '#555a64', 'stroke-width': 1, 'stroke-dasharray': '1 2'
});

candles.forEach(function (c) {
    const x = Math.round(c[0] / 3 + 600);
    const toY = function (v) { return v / 3 + 340; };
    const color = colors[c[5]];
    add('rect', { x: x, y: toY(c[1]), width: 1, height: (c[2] - c[1]) / 3, fill: color, opacity: 0.8 });
    add('rect', { x: x - 3, y: toY(c[3]), width: 7, height: Math.max((c[4] - c[3]) / 3, 1), fill: color });
});
```
